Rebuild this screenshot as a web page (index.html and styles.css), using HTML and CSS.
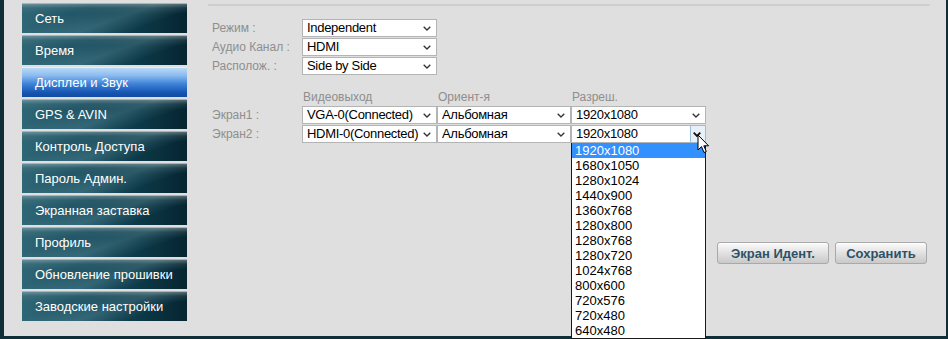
FILE: index.html
```html
<!DOCTYPE html>
<html lang="ru">
<head>
<meta charset="utf-8">
<title>Дисплеи и Звук</title>
<link rel="stylesheet" href="styles.css">
</head>
<body>
<div class="frame">
  <nav class="sidebar">
    <div class="nav-btn">Сеть</div>
    <div class="nav-btn">Время</div>
    <div class="nav-btn active">Дисплеи и Звук</div>
    <div class="nav-btn">GPS &amp; AVIN</div>
    <div class="nav-btn">Контроль Доступа</div>
    <div class="nav-btn">Пароль Админ.</div>
    <div class="nav-btn">Экранная заставка</div>
    <div class="nav-btn">Профиль</div>
    <div class="nav-btn">Обновление прошивки</div>
    <div class="nav-btn">Заводские настройки</div>
  </nav>
  <main class="main">
    <div class="rule"></div>
    <div class="grid-top">
      <div class="label">Режим :</div>
      <div class="sel"><span>Independent</span><svg class="chev" viewBox="0 0 8 5"><path d="M0.7 0.7 L4 4 L7.3 0.7"/></svg></div>
      <div class="label">Аудио Канал :</div>
      <div class="sel"><span>HDMI</span><svg class="chev" viewBox="0 0 8 5"><path d="M0.7 0.7 L4 4 L7.3 0.7"/></svg></div>
      <div class="label">Располож. :</div>
      <div class="sel"><span>Side by Side</span><svg class="chev" viewBox="0 0 8 5"><path d="M0.7 0.7 L4 4 L7.3 0.7"/></svg></div>
    </div>
    <div class="grid-screens">
      <div></div>
      <div class="head">Видеовыход</div>
      <div class="head">Ориент-я</div>
      <div class="head">Разреш.</div>

      <div class="label">Экран1 :</div>
      <div class="sel"><span>VGA-0(Connected)</span><svg class="chev" viewBox="0 0 8 5"><path d="M0.7 0.7 L4 4 L7.3 0.7"/></svg></div>
      <div class="sel"><span>Альбомная</span><svg class="chev" viewBox="0 0 8 5"><path d="M0.7 0.7 L4 4 L7.3 0.7"/></svg></div>
      <div class="sel"><span>1920x1080</span><svg class="chev" viewBox="0 0 8 5"><path d="M0.7 0.7 L4 4 L7.3 0.7"/></svg></div>

      <div class="label">Экран2 :</div>
      <div class="sel"><span>HDMI-0(Connected)</span><svg class="chev" viewBox="0 0 8 5"><path d="M0.7 0.7 L4 4 L7.3 0.7"/></svg></div>
      <div class="sel"><span>Альбомная</span><svg class="chev" viewBox="0 0 8 5"><path d="M0.7 0.7 L4 4 L7.3 0.7"/></svg></div>
      <div class="sel open"><span>1920x1080</span><div class="arrow-hover"><svg class="chev bold" viewBox="0 0 8 5"><path d="M0.7 0.7 L4 4 L7.3 0.7"/></svg></div>
        <ul class="list">
          <li class="hl">1920x1080</li>
          <li>1680x1050</li>
          <li>1280x1024</li>
          <li>1440x900</li>
          <li>1360x768</li>
          <li>1280x800</li>
          <li>1280x768</li>
          <li>1280x720</li>
          <li>1024x768</li>
          <li>800x600</li>
          <li>720x576</li>
          <li>720x480</li>
          <li>640x480</li>
        </ul>
        <svg class="cursor" viewBox="0 0 13 21"><path d="M1 1 L1 16 L4.5 12.6 L7 18.5 L9.3 17.5 L6.8 11.8 L11.6 11.8 Z" fill="#fff" stroke="#000" stroke-width="1" stroke-linejoin="round"/></svg>
      </div>
    </div>
    <div class="actions">
      <button class="act w1">Экран Идент.</button>
      <button class="act w2">Сохранить</button>
    </div>
  </main>
</div>
</body>
</html>
```
FILE: styles.css
```css
* { box-sizing: border-box; }
html, body { margin: 0; padding: 0; }
body { font-family: "Liberation Sans", Arial, sans-serif; background: #0f2e38; }

.frame {
  width: 948px;
  height: 339px;
  background: #dfdfdf;
  border-left: 4px solid #0f2e38;
  border-right: 2px solid #0f2e38;
  border-bottom: 3px solid #0f2e38;
  display: flex;
  overflow: visible;
}

.sidebar {
  width: 183px;
  flex: none;
  padding: 3px 0 0 18px;
  display: flex;
  flex-direction: column;
  gap: 2px;
}

.nav-btn {
  width: 165px;
  height: 30px;
  line-height: 30px;
  padding-left: 13px;
  color: #fff;
  font-size: 13px;
  border-top: 1px solid #9dbac2;
  background:
    linear-gradient(180deg, rgba(255,255,255,.28) 0, rgba(255,255,255,.06) 4px, rgba(255,255,255,0) 10px),
    linear-gradient(160deg, rgba(255,255,255,0) 30%, rgba(120,170,185,.25) 55%, rgba(255,255,255,0) 75%),
    linear-gradient(90deg, #2f6675 0%, #1e5363 35%, #0d3a48 70%, #052530 100%);
  white-space: nowrap;
}

.nav-btn.active {
  border-top: 1px solid #e3f0fc;
  background: linear-gradient(180deg, #b9d8f6 0%, #8dbdf0 25%, #3d82d8 55%, #1555b2 85%, #104ba0 100%);
}

.main {
  flex: 1;
  min-width: 0;
  padding: 0 19px 0 21px;
  position: relative;
}

.rule {
  margin-top: 4px;
  width: 722px;
  height: 2px;
  background: #cecece;
  border-radius: 1px;
}

.grid-top {
  margin-top: 13px;
  display: grid;
  grid-template-columns: 94px 135px;
  grid-auto-rows: 18px;
  row-gap: 1px;
}

.label {
  padding-left: 4px;
  font-size: 12px;
  color: #8e8e8e;
  line-height: 18px;
  white-space: nowrap;
}

.sel {
  position: relative;
  height: 18px;
  background: #fff;
  border: 1px solid #b4b4b4;
  font-size: 13px;
  letter-spacing: -0.3px;
  line-height: 16px;
  color: #000;
  padding-left: 4px;
  white-space: nowrap;
}

.chev {
  position: absolute;
  right: 5px;
  top: 6px;
  width: 8px;
  height: 5px;
  fill: none;
  stroke: #333;
  stroke-width: 1.3;
}
.chev.bold { stroke: #111; stroke-width: 1.8; right: 4px; }

.grid-screens {
  margin-top: 16px;
  display: grid;
  grid-template-columns: 94px 135px 134px 135px;
  grid-template-rows: 15px 18px 18px;
  row-gap: 0;
}
.grid-screens .sel:nth-child(n+9) { margin-top: 1px; }
.grid-screens .label:nth-child(9) { margin-top: 1px; }

.head {
  font-size: 12px;
  color: #8e8e8e;
  line-height: 13px;
  padding-left: 1px;
}

.arrow-hover {
  position: absolute;
  right: -1px;
  top: -1px;
  width: 16px;
  height: 18px;
  background: #e8f1fa;
  border: 1px solid #9cbcd8;
}

.list {
  position: absolute;
  left: -1px;
  top: 17px;
  width: 135px;
  margin: 0;
  padding: 0;
  list-style: none;
  background: #fff;
  border: 1px solid #1a1a1a;
  border-top: 0;
  z-index: 5;
  letter-spacing: 0;
}
.list li {
  height: 15px;
  line-height: 15px;
  font-size: 13px;
  padding-left: 3px;
  color: #000;
}
.list li.hl { background: #3390ff; color: #fff; }

.cursor {
  position: absolute;
  left: 125px;
  top: 8px;
  width: 13px;
  height: 21px;
  z-index: 6;
}

.actions {
  margin-top: 100px;
  display: flex;
  justify-content: flex-end;
  gap: 6px;
}

.act {
  height: 22px;
  padding: 0;
  font-family: "Liberation Sans", Arial, sans-serif;
  font-size: 13px;
  font-weight: bold;
  color: #2d5268;
  border: 1px solid #a9a9a9;
  border-radius: 3px;
  background: linear-gradient(180deg, #fbfbfb 0%, #e6e6e6 40%, #c9c9c9 100%);
  box-shadow: inset 0 1px 0 #fff;
}
.act.w1 { width: 112px; }
.act.w2 { width: 92px; }
```
